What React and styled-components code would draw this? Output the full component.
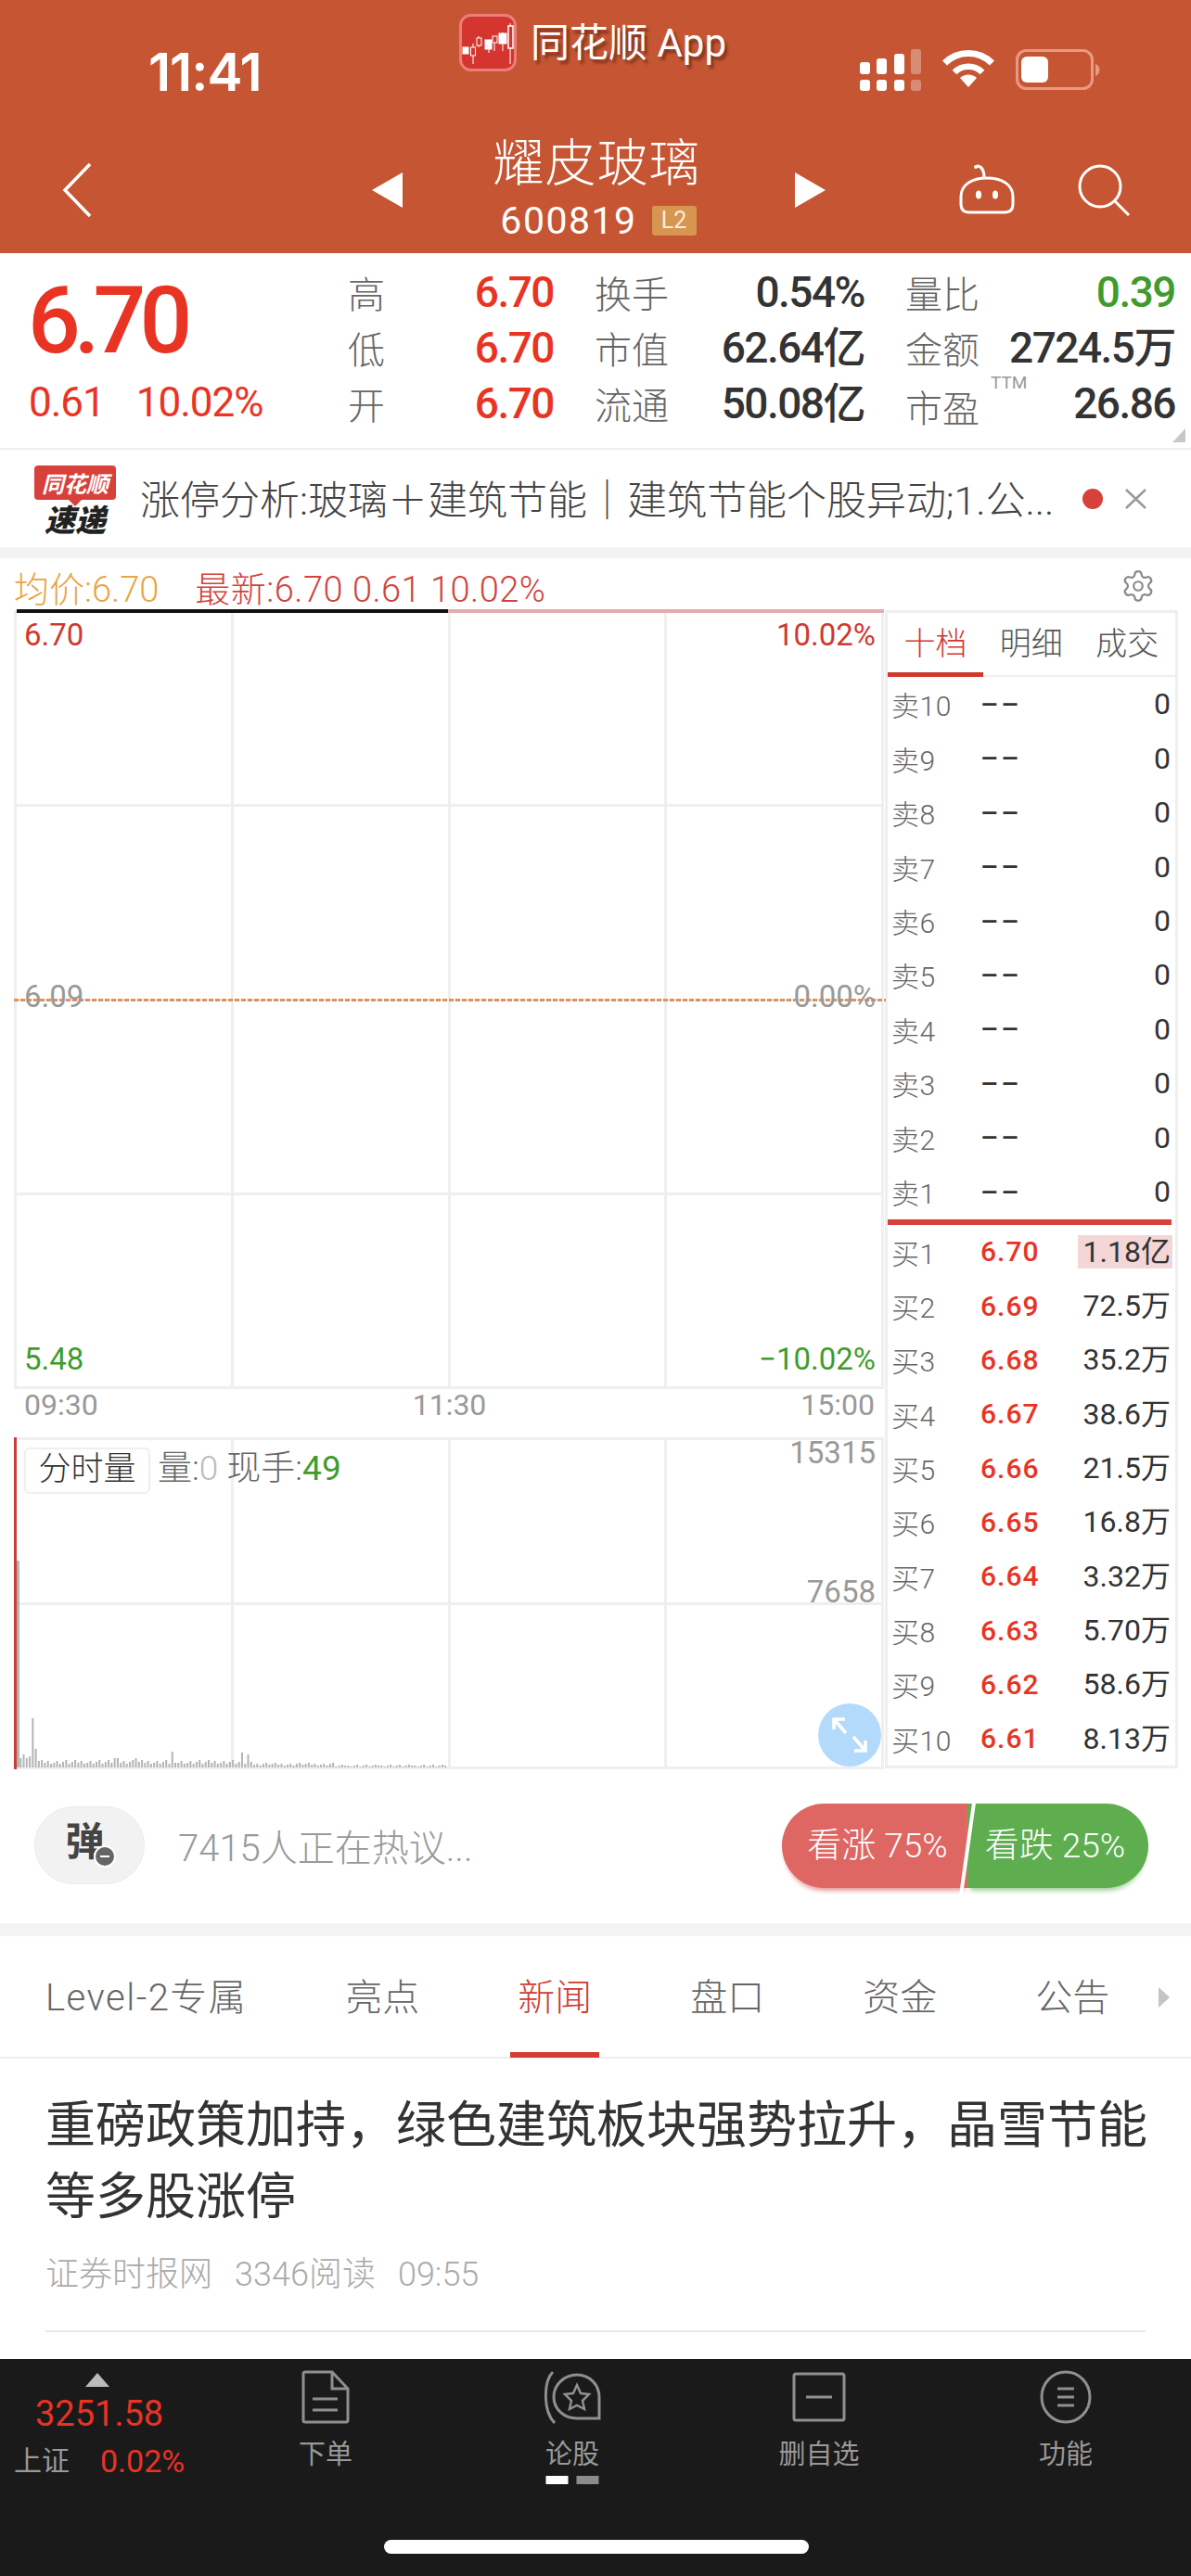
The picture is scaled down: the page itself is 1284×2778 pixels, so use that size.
import React from "react";
import styled, { createGlobalStyle } from "styled-components";
import { Settings } from "lucide-react";

const Global = createGlobalStyle`
  html, body { margin: 0; padding: 0; background: #fff; }
  body { font-family: Roboto, "Noto Sans CJK SC", sans-serif; }
  * { box-sizing: border-box; }
`;
const RED = "#E93323";
const GREEN = "#3F9C2C";
const LINE = "#EFEFEF";

const Page = styled.div`width:1284px;height:2778px;display:flex;flex-direction:column;overflow:hidden;background:#fff;`;

/* header */
const Header = styled.header`height:273px;background:#C65633;color:#fff;display:flex;flex-direction:column;flex:none;`;
const StatusBar = styled.div`height:140px;display:grid;grid-template-columns:495px 1fr auto;padding:15px 97px 0 0;`;
const Clock = styled.div`font:600 57px/1 Inter,Roboto,sans-serif;letter-spacing:-1px;padding:34px 0 0 160px;`;
const AppBadge = styled.div`display:flex;gap:15px;height:62px;align-items:center;`;
const AppName = styled.span`font-size:42px;line-height:1;text-shadow:3px 4px 3px rgba(80,30,15,.6);margin-top:2px;`;
const StatusIcons = styled.div`display:flex;gap:22px;align-items:flex-start;padding-top:38px;`;
const NavRow = styled.div`display:grid;grid-template-columns:1fr auto 1fr;align-items:center;padding:0 66px 0 67px;height:115px;margin-top:7px;`;
const NavCenter = styled.div`display:flex;align-items:center;gap:90px;margin-left:5px;`;
const Arrow = styled.svg`display:block;`;
const Titles = styled.div`display:flex;flex-direction:column;align-items:center;width:293px;margin:-9px -25px 0;`;
const StockName = styled.div`font-size:55px;line-height:66px;letter-spacing:1px;font-weight:300;margin-left:-3px;`;
const CodeRow = styled.div`display:flex;align-items:center;gap:16px;margin-top:9px;`;
const Code = styled.span`font-size:41px;line-height:40px;letter-spacing:1.5px;`;
const Level = styled.span`width:48px;height:32px;background:#D69550;border-radius:3px;font-size:25px;line-height:32px;text-align:center;color:#FBEBD9;`;
const NavRight = styled.div`display:flex;justify-content:flex-end;gap:68px;`;

/* quote */
const Quote = styled.section`height:210px;padding:12px 16px 0 33px;display:grid;grid-template-columns:342px 1fr;position:relative;flex:none;`;
const PriceBlock = styled.div`display:flex;flex-direction:column;padding-top:11px;`;
const BigPrice = styled.div`font-size:100px;line-height:100px;font-weight:500;letter-spacing:-7px;color:${RED};margin-left:-3px;`;
const PriceChange = styled.div`font-size:44px;line-height:50px;letter-spacing:-1px;color:${RED};display:flex;gap:34px;margin:13px 0 0 -2px;`;
const Stats = styled.div`display:grid;grid-template-columns:222px 291px 291px;column-gap:44px;grid-auto-rows:60px;`;
const Stat = styled.div`display:flex;justify-content:space-between;align-items:center;position:relative;`;
const StatLabel = styled.span`font-size:40px;line-height:60px;color:#666;margin-top:${p=>p.$low?14:8}px;font-weight:300;`;
const StatValue = styled.span`font-size:46px;line-height:60px;font-weight:500;letter-spacing:-1.5px;color:${p=>p.$c||"#333"};`;
const Ttm = styled.span`position:absolute;left:92px;top:-2px;font-size:19px;line-height:20px;color:#999;`;
const Corner = styled.div`position:absolute;right:6px;bottom:6px;width:0;height:0;border-left:14px solid transparent;border-bottom:15px solid #C8C8C8;`;
const Rule = styled.div`height:${p=>p.$h}px;background:${p=>p.$c||"#F3F3F3"};flex:none;`;

/* news */
const News = styled.section`height:105px;display:flex;align-items:center;padding:0 47px 0 37px;flex:none;`;
const NewsLogo = styled.div`width:88px;height:72px;display:flex;flex-direction:column;align-items:center;margin-right:26px;`;
const Bubble = styled.div`width:88px;height:37px;background:#D8403A;border-radius:4px;color:#fff;font:italic 700 24px/37px "Noto Sans CJK SC",sans-serif;text-align:center;position:relative;white-space:nowrap;
  &::after{content:"";position:absolute;left:37px;bottom:-7px;border:7px solid transparent;border-bottom:0;border-top-color:#D8403A;}`;
const Swift = styled.div`font:italic 900 33px/34px "Noto Sans CJK SC",sans-serif;color:#222;margin-top:3px;white-space:nowrap;`;
const NewsText = styled.div`font-size:43px;line-height:50px;color:#444;white-space:nowrap;width:986px;font-weight:300;overflow:hidden;margin-top:4px;`;
const RedDot = styled.span`width:22px;height:22px;border-radius:50%;background:#D8403A;margin-left:30px;flex:none;`;
const CloseX = styled.svg`margin-left:23px;flex:none;`;

/* chart */
const ChartSection = styled.section`flex:none;height:1312px;padding:0 14px 0 15px;display:flex;flex-direction:column;`;
const ChartHead = styled.div`height:56px;display:flex;align-items:center;font-size:38px;padding-top:4px;`;
const AvgPrice = styled.span`color:#E8A542;font-weight:300;`;
const Latest = styled.span`color:#D0423B;font-weight:300;margin-left:39px;white-space:pre;letter-spacing:.5px;`;
const Gear = styled.div`margin-left:auto;margin-right:24px;color:#8A8A8A;display:flex;`;
const ChartBody = styled.div`display:grid;grid-template-columns:938px 317px;height:1252px;`;
const ChartCol = styled.div`display:flex;flex-direction:column;`;
const PlotGrid = styled.div`position:relative;display:grid;grid-template-columns:repeat(4,1fr);grid-template-rows:repeat(${p=>p.$rows},1fr);height:${p=>p.$h}px;border-top:3px solid ${LINE};border-left:3px solid ${LINE};`;
const Cell = styled.div`border-right:3px solid ${LINE};border-bottom:3px solid ${LINE};`;
const TopBar = styled.div`position:absolute;top:-4px;height:4px;left:${p=>p.$l}px;width:${p=>p.$w}px;background:${p=>p.$c};`;
const AxisLabel = styled.span`position:absolute;font-size:33px;line-height:36px;color:${p=>p.$c};${p=>p.$side}:${p=>p.$side==="left"?8:9}px;top:${p=>p.$t}px;`;
const DashLine = styled.div`position:absolute;left:-3px;right:-2px;top:416px;height:3px;background:repeating-linear-gradient(90deg,#E0925A 0 5px,transparent 5px 7px);`;
const TimeAxis = styled.div`height:52px;display:flex;justify-content:space-between;padding:0 10px 0 11px;font-size:32px;line-height:34px;color:#999;`;
const VolTag = styled.span`position:absolute;left:8px;top:8px;width:136px;height:50px;border:2px solid ${LINE};border-radius:6px;font-size:35px;line-height:44px;text-align:center;color:#333;background:#fff;font-weight:300;`;
const VolInfo = styled.span`position:absolute;left:152px;top:8px;font-size:37px;line-height:46px;color:#666;font-weight:300;white-space:pre;`;
const VolZero = styled.span`color:#BBB;`;
const VolHand = styled.span`color:${GREEN};font-weight:400;`;
const VolMark = styled.span`position:absolute;left:-3px;top:-3px;bottom:0;width:3px;background:#C9403A;`;
const VolBars = styled.svg`position:absolute;left:-3px;bottom:0;display:block;`;
const Expand = styled.div`position:absolute;right:3px;bottom:3px;width:68px;height:68px;border-radius:50%;background:#B3DAFB;display:flex;align-items:center;justify-content:center;`;

const Book = styled.div`height:1249px;border:3px solid ${LINE};display:flex;flex-direction:column;margin-left:1px;`;
const BookTabs = styled.div`height:69px;display:grid;grid-template-columns:103px 1fr 1fr;border-bottom:2px solid ${LINE};flex:none;`;
const BookTab = styled.div`font-size:34px;line-height:66px;text-align:center;color:${p=>p.$on?"#D0392F":"#555"};font-weight:300;position:relative;
  ${p=>p.$on?`&::after{content:"";position:absolute;left:0;right:0;bottom:-2px;height:5px;background:#D0392F;}`:""}`;
const Orders = styled.div`flex:${p=>p.$f};display:flex;flex-direction:column;padding:0 0 0 4px;`;
const Order = styled.div`flex:1;display:grid;grid-template-columns:96px 1fr auto;align-items:center;padding-right:3px;`;
const OrderName = styled.span`font-size:30px;color:#666;font-weight:300;letter-spacing:.5px;`;
const OrderPrice = styled.span`font-size:30px;font-weight:500;letter-spacing:${p=>p.$dash?"3px":"1px"};color:${p=>p.$dash?"#333":RED};`;
const OrderQty = styled.span`font-size:32px;color:#333;text-align:right;padding:0 2px 0 6px;line-height:36px;background:${p=>p.$hl?"#F4D6D6":"transparent"};`;
const BookRule = styled.div`height:6px;background:#D8403A;margin:0 4px 0 0;flex:none;`;

/* comment bar */
const Comment = styled.section`height:160px;flex:none;display:flex;align-items:center;padding:0 46px 8px 37px;`;
const Danmu = styled.div`width:119px;height:84px;border-radius:42px;background:#F2F2F2;border:1px solid #EBEBEB;position:relative;font-size:42px;line-height:76px;font-weight:700;color:#444;text-align:center;padding-right:10px;margin-right:36px;`;
const MinusBadge = styled.span`position:absolute;left:63px;top:41px;width:24px;height:24px;border-radius:50%;background:#666;border:2px solid #fff;
  &::after{content:"";position:absolute;left:5px;top:9px;width:10px;height:2px;background:#fff;}`;
const Talk = styled.span`font-size:40px;color:#999;font-weight:300;flex:1;`;
const Vote = styled.div`display:grid;grid-template-columns:200px 195px;height:91px;position:relative;`;
const VoteBtn = styled.div`background:${p=>p.$c};color:#FFF;font-size:37px;line-height:91px;white-space:nowrap;font-weight:300;text-align:center;border-radius:${p=>p.$left?"46px 0 0 46px":"0 46px 46px 0"};box-shadow:0 6px 5px -3px ${p=>p.$s};padding-${p=>p.$left?"left":"right"}:6px;`;
const VoteSlash = styled.span`position:absolute;left:198px;top:-1px;bottom:-8px;width:4px;background:#fff;transform:skewX(-8deg);`;

/* tabs */
const Tabs = styled.nav`height:132px;flex:none;display:flex;gap:106px;padding:0 0 0 49px;border-bottom:2px solid #EDEDED;position:relative;`;
const Tab = styled.div`font-size:40px;line-height:134px;color:${p=>p.$on?"#D0392F":"#666"};font-weight:300;position:relative;white-space:nowrap;letter-spacing:${p=>p.$wide?"1.5px":"0"};
  ${p=>p.$on?`&::after{content:"";position:absolute;left:-8px;right:-8px;bottom:-1px;height:6px;background:#D43C33;}`:""}`;
const TabMore = styled.span`position:absolute;right:23px;top:55px;border:11px solid transparent;border-right:0;border-left:12px solid #C4C4C4;`;

/* article */
const Article = styled.article`flex:none;height:324px;padding:34px 45px 0 49px;`;
const ArticleTitle = styled.h1`margin:0;font-size:54px;line-height:77px;font-weight:400;color:#333;`;
const Meta = styled.div`display:flex;gap:24px;font-size:36px;line-height:50px;color:#AAA;font-weight:300;margin-top:20px;`;
const ArticleRule = styled.div`height:2px;background:#EAEAEA;margin:35px 4px 0 0;`;

/* bottom bar */
const Dock = styled.footer`flex:1;background:#1A1A1A;position:relative;display:grid;grid-template-columns:218px repeat(4,266px);align-content:start;padding-top:12px;`;
const Index = styled.div`display:flex;flex-direction:column;padding:3px 0 0 15px;`;
const UpMark = styled.span`width:0;height:0;border:13px solid transparent;border-top:0;border-bottom:15px solid #BBB;margin-left:77px;`;
const IndexValue = styled.div`font-size:38px;line-height:44px;color:${RED};margin:7px 0 0 23px;`;
const IndexRow = styled.div`display:flex;align-items:center;gap:33px;margin-top:7px;`;
const IndexName = styled.span`font-size:30px;line-height:44px;color:#999;`;
const IndexPct = styled.span`font-size:34px;line-height:44px;color:${RED};`;
const DockItem = styled.div`display:flex;flex-direction:column;align-items:center;position:relative;`;
const DockIcon = styled.svg`display:block;`;
const DockLabel = styled.span`font-size:29px;line-height:40px;color:#999;margin-top:13px;`;
const Pager = styled.div`display:flex;gap:9px;position:absolute;top:114px;left:50%;transform:translateX(-50%);`;
const PageDot = styled.span`width:24px;height:9px;background:${p=>p.$on?"#fff":"#8C8C8C"};`;
const HomeBar = styled.div`position:absolute;left:414px;bottom:24px;width:458px;height:15px;border-radius:8px;background:#fff;`;

const sells = [10,9,8,7,6,5,4,3,2,1];
const buys = [
  ["6.70","1.18亿"],["6.69","72.5万"],["6.68","35.2万"],["6.67","38.6万"],["6.66","21.5万"],
  ["6.65","16.8万"],["6.64","3.32万"],["6.63","5.70万"],["6.62","58.6万"],["6.61","8.13万"],
];
const stats = [
  ["高","6.70",RED],["换手","0.54%"],["量比","0.39",GREEN],
  ["低","6.70",RED],["市值","62.64亿"],["金额","2724.5万"],
  ["开","6.70",RED],["流通","50.08亿"],["市盈","26.86"],
];
const tabs = ["Level-2专属","亮点","新闻","盘口","资金","公告"];

const spikes = {0:223,1:10,2:14,3:10,4:12,5:53,6:20,7:7,32:10,33:10,39:10,40:6,41:8,51:17,52:5,74:16,75:4,76:14,77:6};
const bars = Array.from({length:142},(_,i)=>{
  if (spikes[i]!==undefined) return spikes[i];
  const base = i<74 ? 4.5 : i<105 ? 3 : 2;
  return Math.max(1,Math.round(base+((i*37)%11)/11*base*1.1-1));
});

const CandleLogo = () => (
  <svg width="62" height="62" viewBox="0 0 62 62">
    <rect x="1.5" y="1.5" width="59" height="59" rx="11" fill="#D4352F" stroke="#EC7E78" strokeWidth="3"/>
    <g stroke="#fff" strokeWidth="1" fill="none">
      <rect x="4" y="36" width="6" height="7" fill="#fff"/>
      <path d="M15 32v22M21 24v12M32 28v14M38 26v14M47 20v20M55 10v44" />
      <rect x="12.500" y="36" width="5" height="9" fill="#D4352F" stroke="#fff"/>
      <rect x="19" y="26" width="5" height="8" fill="#D4352F" stroke="#fff"/>
      <rect x="28" y="28" width="7" height="10" fill="#fff"/>
      <rect x="36" y="24" width="5" height="7" fill="#D4352F" stroke="#fff"/>
      <rect x="43" y="21" width="8" height="11" fill="#fff"/>
      <rect x="53" y="13" width="5" height="24" fill="#D4352F" stroke="#fff" strokeWidth="1.500"/>
    </g>
  </svg>
);
const Signal = () => (
  <svg width="66" height="46" viewBox="0 0 66 46" fill="#fff">
    <rect x="0" y="14" width="11" height="13" rx="3"/><rect x="0" y="33" width="11" height="12" rx="3"/>
    <rect x="18" y="10" width="11" height="17" rx="3"/><rect x="18" y="33" width="11" height="12" rx="3"/>
    <rect x="37" y="5" width="11" height="22" rx="3"/><rect x="37" y="33" width="11" height="12" rx="3"/>
    <g opacity=".32"><rect x="55" y="0" width="11" height="27" rx="3"/><rect x="55" y="33" width="11" height="12" rx="3"/></g>
  </svg>
);
const Wifi = () => (
  <svg width="58" height="42" viewBox="0 0 58 42" fill="none" stroke="#fff">
    <path d="M3.500 15A36 36 0 0 1 54.500 15" strokeWidth="7"/>
    <path d="M14 25A21 21 0 0 1 44 25" strokeWidth="6.500"/>
    <path d="M29 41L20 31A13 13 0 0 1 38 31Z" fill="#fff" stroke="none"/>
  </svg>
);
const Battery = () => (
  <svg width="92" height="44" viewBox="0 0 92 44">
    <rect x="1.500" y="1.500" width="81" height="41" rx="10" fill="none" stroke="#E79A83" strokeWidth="3"/>
    <rect x="6" y="8" width="29" height="28" rx="6" fill="#fff"/>
    <path d="M86 16a7 7 0 0 1 0 13z" fill="#E79A83"/>
  </svg>
);
const Back = () => (
  <svg width="32" height="60" viewBox="0 0 32 60" fill="none" stroke="#fff" strokeWidth="3.500"><path d="M30 2L3 30l27 28"/></svg>
);
const Robot = () => (
  <svg width="60" height="54" viewBox="0 0 60 54" fill="none" stroke="#fff" strokeWidth="3">
    <path d="M19 2c6 0 8 6 8 13"/><circle cx="18" cy="3" r="2" fill="#fff" stroke="none"/>
    <path d="M2 35C2 22 14 15 30 15s28 7 28 20v8c0 6-3 9-9 9H11c-6 0-9-3-9-9z"/>
    <ellipse cx="21" cy="33" rx="3" ry="4.500" fill="#fff" stroke="none"/><ellipse cx="39" cy="33" rx="3" ry="4.500" fill="#fff" stroke="none"/>
  </svg>
);
const Search = () => (
  <svg width="56" height="56" viewBox="0 0 56 56" fill="none" stroke="#fff" strokeWidth="3"><circle cx="24" cy="24" r="22"/><path d="M40 40l15 15"/></svg>
);
const ExpandIcon = () => (
  <svg width="40" height="40" viewBox="0 0 40 40" fill="none" stroke="#fff" strokeWidth="3.500">
    <path d="M3 14V3h12M3 3l13 15M37 26v11H25M37 37L24 22"/>
  </svg>
);

const App = () => (
  <Page>
    <Global/>
    <Header>
      <StatusBar>
        <Clock>11:41</Clock>
        <AppBadge><CandleLogo/><AppName>同花顺 App</AppName></AppBadge>
        <StatusIcons><Signal/><Wifi/><Battery/></StatusIcons>
      </StatusBar>
      <NavRow>
        <Back/>
        <NavCenter>
          <Arrow width="33" height="38" viewBox="0 0 33 38"><path d="M33 0v38L0 19z" fill="#fff"/></Arrow>
          <Titles>
            <StockName>耀皮玻璃</StockName>
            <CodeRow><Code>600819</Code><Level>L2</Level></CodeRow>
          </Titles>
          <Arrow width="33" height="38" viewBox="0 0 33 38"><path d="M0 0v38l33-19z" fill="#fff"/></Arrow>
        </NavCenter>
        <NavRight><Robot/><Search/></NavRight>
      </NavRow>
    </Header>

    <Quote>
      <PriceBlock>
        <BigPrice>6.70</BigPrice>
        <PriceChange><span>0.61</span><span>10.02%</span></PriceChange>
      </PriceBlock>
      <Stats>
        {stats.map(([l,v,c],i)=>(
          <Stat key={i}>
            <StatLabel $low={l==="市盈"}>{l}</StatLabel>
            {l==="市盈" && <Ttm>TTM</Ttm>}
            <StatValue $c={c}>{v}</StatValue>
          </Stat>
        ))}
      </Stats>
      <Corner/>
    </Quote>
    <Rule $h={2} $c="#F0F0F0"/>

    <News>
      <NewsLogo><Bubble>同花顺</Bubble><Swift>速递</Swift></NewsLogo>
      <NewsText>涨停分析:玻璃＋建筑节能｜建筑节能个股异动;1.公...</NewsText>
      <RedDot/>
      <CloseX width="25" height="22" viewBox="0 0 25 22" fill="none" stroke="#999" strokeWidth="2.500"><path d="M2 1l21 20M23 1L2 21"/></CloseX>
    </News>
    <Rule $h={12}/>

    <ChartSection>
      <ChartHead>
        <AvgPrice>均价:6.70</AvgPrice>
        <Latest>最新:6.70 0.61 10.02%</Latest>
        <Gear><Settings size={38} strokeWidth={1.4}/></Gear>
      </ChartHead>
      <ChartBody>
        <ChartCol>
          <PlotGrid $rows={4} $h={840}>
            {Array.from({length:16},(_,i)=><Cell key={i}/>)}
            <TopBar $l={0} $w={465} $c="#111"/>
            <TopBar $l={465} $w={470} $c="#E5ACAC"/>
            <DashLine/>
            <AxisLabel $side="left" $t={6} $c="#D0392F">6.70</AxisLabel>
            <AxisLabel $side="right" $t={6} $c="#D0392F">10.02%</AxisLabel>
            <AxisLabel $side="left" $t={396} $c="#999">6.09</AxisLabel>
            <AxisLabel $side="right" $t={396} $c="#999">0.00%</AxisLabel>
            <AxisLabel $side="left" $t={787} $c={GREEN}>5.48</AxisLabel>
            <AxisLabel $side="right" $t={787} $c={GREEN}>−10.02%</AxisLabel>
          </PlotGrid>
          <TimeAxis><span>09:30</span><span>11:30</span><span>15:00</span></TimeAxis>
          <PlotGrid $rows={2} $h={358}>
            {Array.from({length:8},(_,i)=><Cell key={i}/>)}
            <VolMark/>
            <VolBars width="470" height="228" viewBox="0 0 470 228">
              {bars.map((h,i)=>h>0 && <rect key={i} x={3+i*3.27} y={228-h-2} width={i===0?3:2} height={h} fill="#B4B4B4"/>)}
            </VolBars>
            <VolTag>分时量</VolTag>
            <VolInfo>量:<VolZero>0</VolZero> 现手:<VolHand>49</VolHand></VolInfo>
            <AxisLabel $side="right" $t={-4} $c="#999">15315</AxisLabel>
            <AxisLabel $side="right" $t={146} $c="#999">7658</AxisLabel>
            <Expand><ExpandIcon/></Expand>
          </PlotGrid>
        </ChartCol>
        <Book>
          <BookTabs><BookTab $on>十档</BookTab><BookTab>明细</BookTab><BookTab>成交</BookTab></BookTabs>
          <Orders $f={585}>
            {sells.map(n=>(
              <Order key={n}><OrderName>卖{n}</OrderName><OrderPrice $dash>––</OrderPrice><OrderQty>0</OrderQty></Order>
            ))}
          </Orders>
          <BookRule/>
          <Orders $f={584}>
            {buys.map(([p,q],i)=>(
              <Order key={i}><OrderName>买{i+1}</OrderName><OrderPrice>{p}</OrderPrice><OrderQty $hl={i===0}>{q}</OrderQty></Order>
            ))}
          </Orders>
        </Book>
      </ChartBody>
    </ChartSection>

    <Comment>
      <Danmu>弹<MinusBadge/></Danmu>
      <Talk>7415人正在热议...</Talk>
      <Vote>
        <VoteBtn $left $c="#DE6764" $s="#E89A98">看涨 75%</VoteBtn>
        <VoteBtn $c="#5EAD4F" $s="#A3D299">看跌 25%</VoteBtn>
        <VoteSlash/>
      </Vote>
    </Comment>
    <Rule $h={14}/>

    <Tabs>
      {tabs.map((t,i)=><Tab key={t} $on={t==="新闻"} $wide={i===0}>{t}</Tab>)}
      <TabMore/>
    </Tabs>

    <Article>
      <ArticleTitle>重磅政策加持，绿色建筑板块强势拉升，晶雪节能等多股涨停</ArticleTitle>
      <Meta><span>证券时报网</span><span>3346阅读</span><span>09:55</span></Meta>
      <ArticleRule/>
    </Article>

    <Dock>
      <Index>
        <UpMark/>
        <IndexValue>3251.58</IndexValue>
        <IndexRow><IndexName>上证</IndexName><IndexPct>0.02%</IndexPct></IndexRow>
      </Index>
      <DockItem>
        <DockIcon width="52" height="58" viewBox="0 0 52 58" fill="none" stroke="#8F8F8F" strokeWidth="3">
          <path d="M33 2H4a2 2 0 0 0-2 2v50a2 2 0 0 0 2 2h44a2 2 0 0 0 2-2V20zM33 2v18h17M12 31h27M12 43h27"/>
        </DockIcon>
        <DockLabel>下单</DockLabel>
      </DockItem>
      <DockItem>
        <DockIcon width="62" height="58" viewBox="0 0 62 58" fill="none" stroke="#8F8F8F" strokeWidth="3">
          <path d="M10 2C0 12-1 44 12 57"/>
          <path d="M60 52H36C22 52 11 42 11 29S22 5 36 5s24 11 24 24z"/>
          <path d="M36 16l4 9 9 1-7 7 2 9-8-4-8 4 2-9-7-7 9-1z" strokeWidth="2.500"/>
        </DockIcon>
        <DockLabel>论股</DockLabel>
        <Pager><PageDot $on/><PageDot/></Pager>
      </DockItem>
      <DockItem>
        <DockIcon width="58" height="58" viewBox="0 0 58 58" fill="none" stroke="#8F8F8F" strokeWidth="3">
          <rect x="2" y="4" width="54" height="50" rx="2"/><path d="M15 29h28"/>
        </DockIcon>
        <DockLabel>删自选</DockLabel>
      </DockItem>
      <DockItem>
        <DockIcon width="56" height="58" viewBox="0 0 56 58" fill="none" stroke="#8F8F8F" strokeWidth="3">
          <ellipse cx="28" cy="29" rx="26" ry="27"/><path d="M19 20h18M19 29h18M19 38h18"/>
        </DockIcon>
        <DockLabel>功能</DockLabel>
      </DockItem>
      <HomeBar/>
    </Dock>
  </Page>
);

export default App;
